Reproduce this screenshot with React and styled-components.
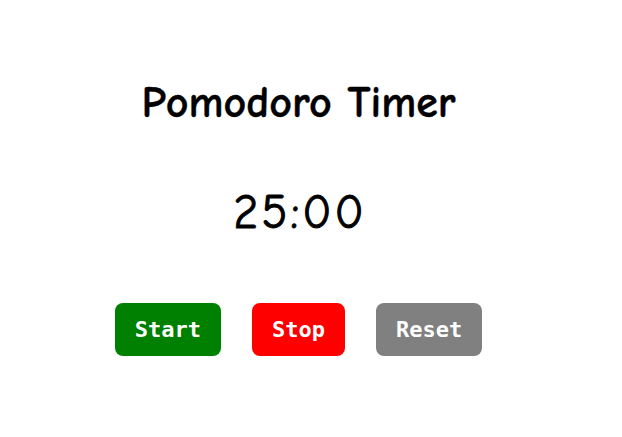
import React from "react";
import styled, { createGlobalStyle } from "styled-components";

const Global = createGlobalStyle`
  html, body { margin: 0; padding: 0; background: #fff; }
  body { font-family: "Comic Sans MS", "Comic Neue", "Liberation Sans", sans-serif; }
`;

const Page = styled.div`
  width: 597px;
  display: flex;
  flex-direction: column;
  align-items: center;
  padding-top: 72px;
`;

const Title = styled.h1`
  margin: 0;
  font-size: 44px;
  font-weight: bold;
  color: #000;
  line-height: 62px;
  -webkit-text-stroke: 0.4px #000;
`;

const Clock = styled.div`
  margin-top: 51px;
  font-size: 48px;
  line-height: 56px;
  letter-spacing: 3px;
  padding-left: 3px;
  color: #000;
  -webkit-text-stroke: 0.9px #000;
`;

const Controls = styled.div`
  margin-top: 62px;
  display: flex;
  gap: 31px;
`;

const Button = styled.button`
  border: none;
  border-radius: 8px;
  padding: 14px 20px;
  background: ${(p) => p.$bg};
  color: #fff;
  font-family: "DejaVu Sans Mono", monospace;
  font-weight: bold;
  font-size: 22px;
  line-height: 25px;
  height: 53px;
  cursor: pointer;
`;

export default function App() {
  return (
    <>
      <Global />
      <Page>
        <Title>Pomodoro Timer</Title>
        <Clock>25:00</Clock>
        <Controls>
          <Button $bg="#008000">Start</Button>
          <Button $bg="#ff0000">Stop</Button>
          <Button $bg="#808080">Reset</Button>
        </Controls>
      </Page>
    </>
  );
}
